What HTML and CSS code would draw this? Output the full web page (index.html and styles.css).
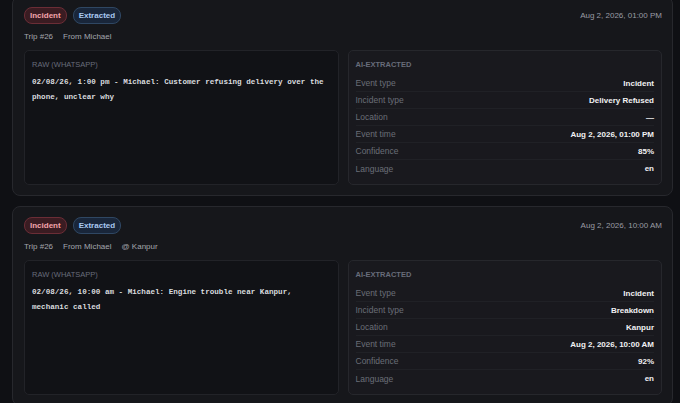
FILE: index.html
```html
<!DOCTYPE html>
<html>
<head>
    <meta charset="UTF-8">
    <title>Trip events</title>
    <link rel="stylesheet" href="styles.css">
</head>
<body>
    <div class="event-list">

        <div class="event-card">
            <div class="event-head">
                <div class="badges">
                    <span class="badge badge-incident">Incident</span>
                    <span class="badge badge-extracted">Extracted</span>
                </div>
                <span class="event-date">Aug 2, 2026, 01:00 PM</span>
            </div>
            <div class="event-meta">
                <span>Trip #26</span>
                <span>From Michael</span>
            </div>
            <div class="panels">
                <div class="panel panel-raw">
                    <div class="panel-label">Raw (WhatsApp)</div>
                    <div class="raw-text">02/08/26, 1:00 pm - Michael: Customer refusing delivery over the phone, unclear why</div>
                </div>
                <div class="panel panel-ai">
                    <div class="panel-label">AI-Extracted</div>
                    <div class="field"><span>Event type</span><b>Incident</b></div>
                    <div class="field"><span>Incident type</span><b>Delivery Refused</b></div>
                    <div class="field"><span>Location</span><b>—</b></div>
                    <div class="field"><span>Event time</span><b>Aug 2, 2026, 01:00 PM</b></div>
                    <div class="field"><span>Confidence</span><b>85%</b></div>
                    <div class="field"><span>Language</span><b>en</b></div>
                </div>
            </div>
        </div>

        <div class="event-card">
            <div class="event-head">
                <div class="badges">
                    <span class="badge badge-incident">Incident</span>
                    <span class="badge badge-extracted">Extracted</span>
                </div>
                <span class="event-date">Aug 2, 2026, 10:00 AM</span>
            </div>
            <div class="event-meta">
                <span>Trip #26</span>
                <span>From Michael</span>
                <span>@ Kanpur</span>
            </div>
            <div class="panels">
                <div class="panel panel-raw">
                    <div class="panel-label">Raw (WhatsApp)</div>
                    <div class="raw-text">02/08/26, 10:00 am - Michael: Engine trouble near Kanpur, mechanic called</div>
                </div>
                <div class="panel panel-ai">
                    <div class="panel-label">AI-Extracted</div>
                    <div class="field"><span>Event type</span><b>Incident</b></div>
                    <div class="field"><span>Incident type</span><b>Breakdown</b></div>
                    <div class="field"><span>Location</span><b>Kanpur</b></div>
                    <div class="field"><span>Event time</span><b>Aug 2, 2026, 10:00 AM</b></div>
                    <div class="field"><span>Confidence</span><b>92%</b></div>
                    <div class="field"><span>Language</span><b>en</b></div>
                </div>
            </div>
        </div>

    </div>
</body>
</html>
```

FILE: styles.css
```css
body {
    margin: 0;
    font-family: 'Liberation Sans', Arial, sans-serif;
    font-size: 8px;
    background: #0f1014;
    color: #e6e7ea;
    overflow: hidden;
}

.event-list {
    display: flex;
    flex-direction: column;
    gap: 10px;
    margin-top: -4px;
    padding: 0 7px 0 12px;
}

.event-card {
    background: #16171b;
    border: 1px solid #27282d;
    border-radius: 8px;
    padding: 10px 10px 10px 11px;
}

.event-head {
    display: flex;
    align-items: center;
    justify-content: space-between;
}

.badges {
    display: flex;
    gap: 6px;
}

.badge {
    display: inline-block;
    height: 15px;
    line-height: 15px;
    padding: 0 5px;
    border-radius: 8px;
    font-weight: bold;
}

.badge-incident {
    background: #3a1c22;
    border: 1px solid #6b2d36;
    color: #f2a4ac;
}

.badge-extracted {
    background: #19263a;
    border: 1px solid #2f4763;
    color: #a9c9f1;
}

.event-date {
    color: #9a9ca4;
}

.event-meta {
    display: flex;
    gap: 10px;
    margin-top: 7px;
    line-height: 12px;
    color: #a3a6ad;
}

.panels {
    display: grid;
    grid-template-columns: 1fr 1fr;
    gap: 9px;
    margin-top: 7px;
}

.panel {
    border-radius: 5px;
    padding: 8px 7px 7px 7px;
}

.panel-raw {
    background: #111216;
    border: 1px solid #222328;
}

.panel-ai {
    background: #19191e;
    border: 1px solid #26272c;
}

.panel-label {
    font-size: 7.5px;
    line-height: 12px;
    font-weight: bold;
    text-transform: uppercase;
    color: #686c7a;
    margin-bottom: 4px;
}

.panel-raw .panel-label {
    font-weight: normal;
}

.raw-text {
    font-family: 'Liberation Mono', 'Courier New', monospace;
    font-size: 7.6px;
    font-weight: bold;
    line-height: 15px;
    color: #d9dbdf;
}

.field {
    display: flex;
    justify-content: space-between;
    align-items: center;
    height: 17px;
    font-size: 8.5px;
    color: #6a6e77;
    border-bottom: 1px solid #202126;
    box-sizing: border-box;
}

.field:last-child {
    border-bottom: none;
}

.field b {
    font-size: 8px;
    color: #f1f1f3;
}
```
